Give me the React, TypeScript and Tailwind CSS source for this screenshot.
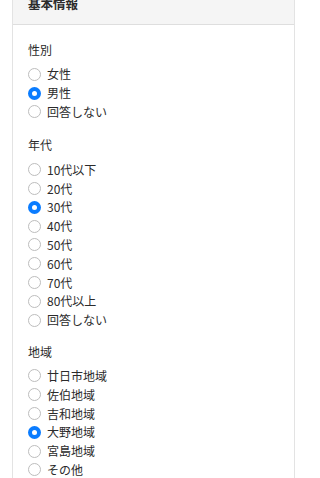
import React from 'react'

type Group = {
  label: string
  options: string[]
  selected: string
}

const groups: Group[] = [
  { label: '性別', options: ['女性', '男性', '回答しない'], selected: '男性' },
  {
    label: '年代',
    options: ['10代以下', '20代', '30代', '40代', '50代', '60代', '70代', '80代以上', '回答しない'],
    selected: '30代',
  },
  {
    label: '地域',
    options: ['廿日市地域', '佐伯地域', '吉和地域', '大野地域', '宮島地域', 'その他'],
    selected: '大野地域',
  },
]

const Radio: React.FC<{ checked: boolean }> = ({ checked }) =>
  checked ? (
    <span className="w-[13px] h-[13px] rounded-full bg-[#0a7cff] flex items-center justify-center shrink-0">
      <span className="w-[5px] h-[5px] rounded-full bg-white" />
    </span>
  ) : (
    <span className="w-[13px] h-[13px] rounded-full border border-[#bdbdbd] bg-white shrink-0" />
  )

export default function App() {
  return (
    <div
      className="h-[478px] w-[300px] bg-white text-[#2b2b2b] overflow-hidden"
      style={{ fontFamily: '"Noto Sans CJK JP", "Noto Sans", sans-serif' }}
    >
      <div className="ml-[12px] mr-[5px] -mt-[16px] border-x border-[#e3e3e3] h-[494px]">
        <div className="bg-[#f5f5f5] border-b border-[#dedede] px-[15px] py-[12px]">
          <h2 className="text-[12.5px] leading-[16px] font-bold">基本情報</h2>
        </div>
        <div className="pl-[15px] pr-[15px] pt-[15px]">
          {groups.map((g, gi) => (
            <div key={g.label} className={gi === 1 ? 'mt-[14px]' : gi === 2 ? 'mt-[12px]' : ''}>
              <p className="text-[12px] leading-[20px]">{g.label}</p>
              <ul className="mt-[5px]">
                {g.options.map((o) => (
                  <li key={o} className="h-[18.8px] flex items-center gap-[6px] text-[12px]">
                    <Radio checked={o === g.selected} />
                    <span>{o}</span>
                  </li>
                ))}
              </ul>
            </div>
          ))}
        </div>
      </div>
    </div>
  )
}
